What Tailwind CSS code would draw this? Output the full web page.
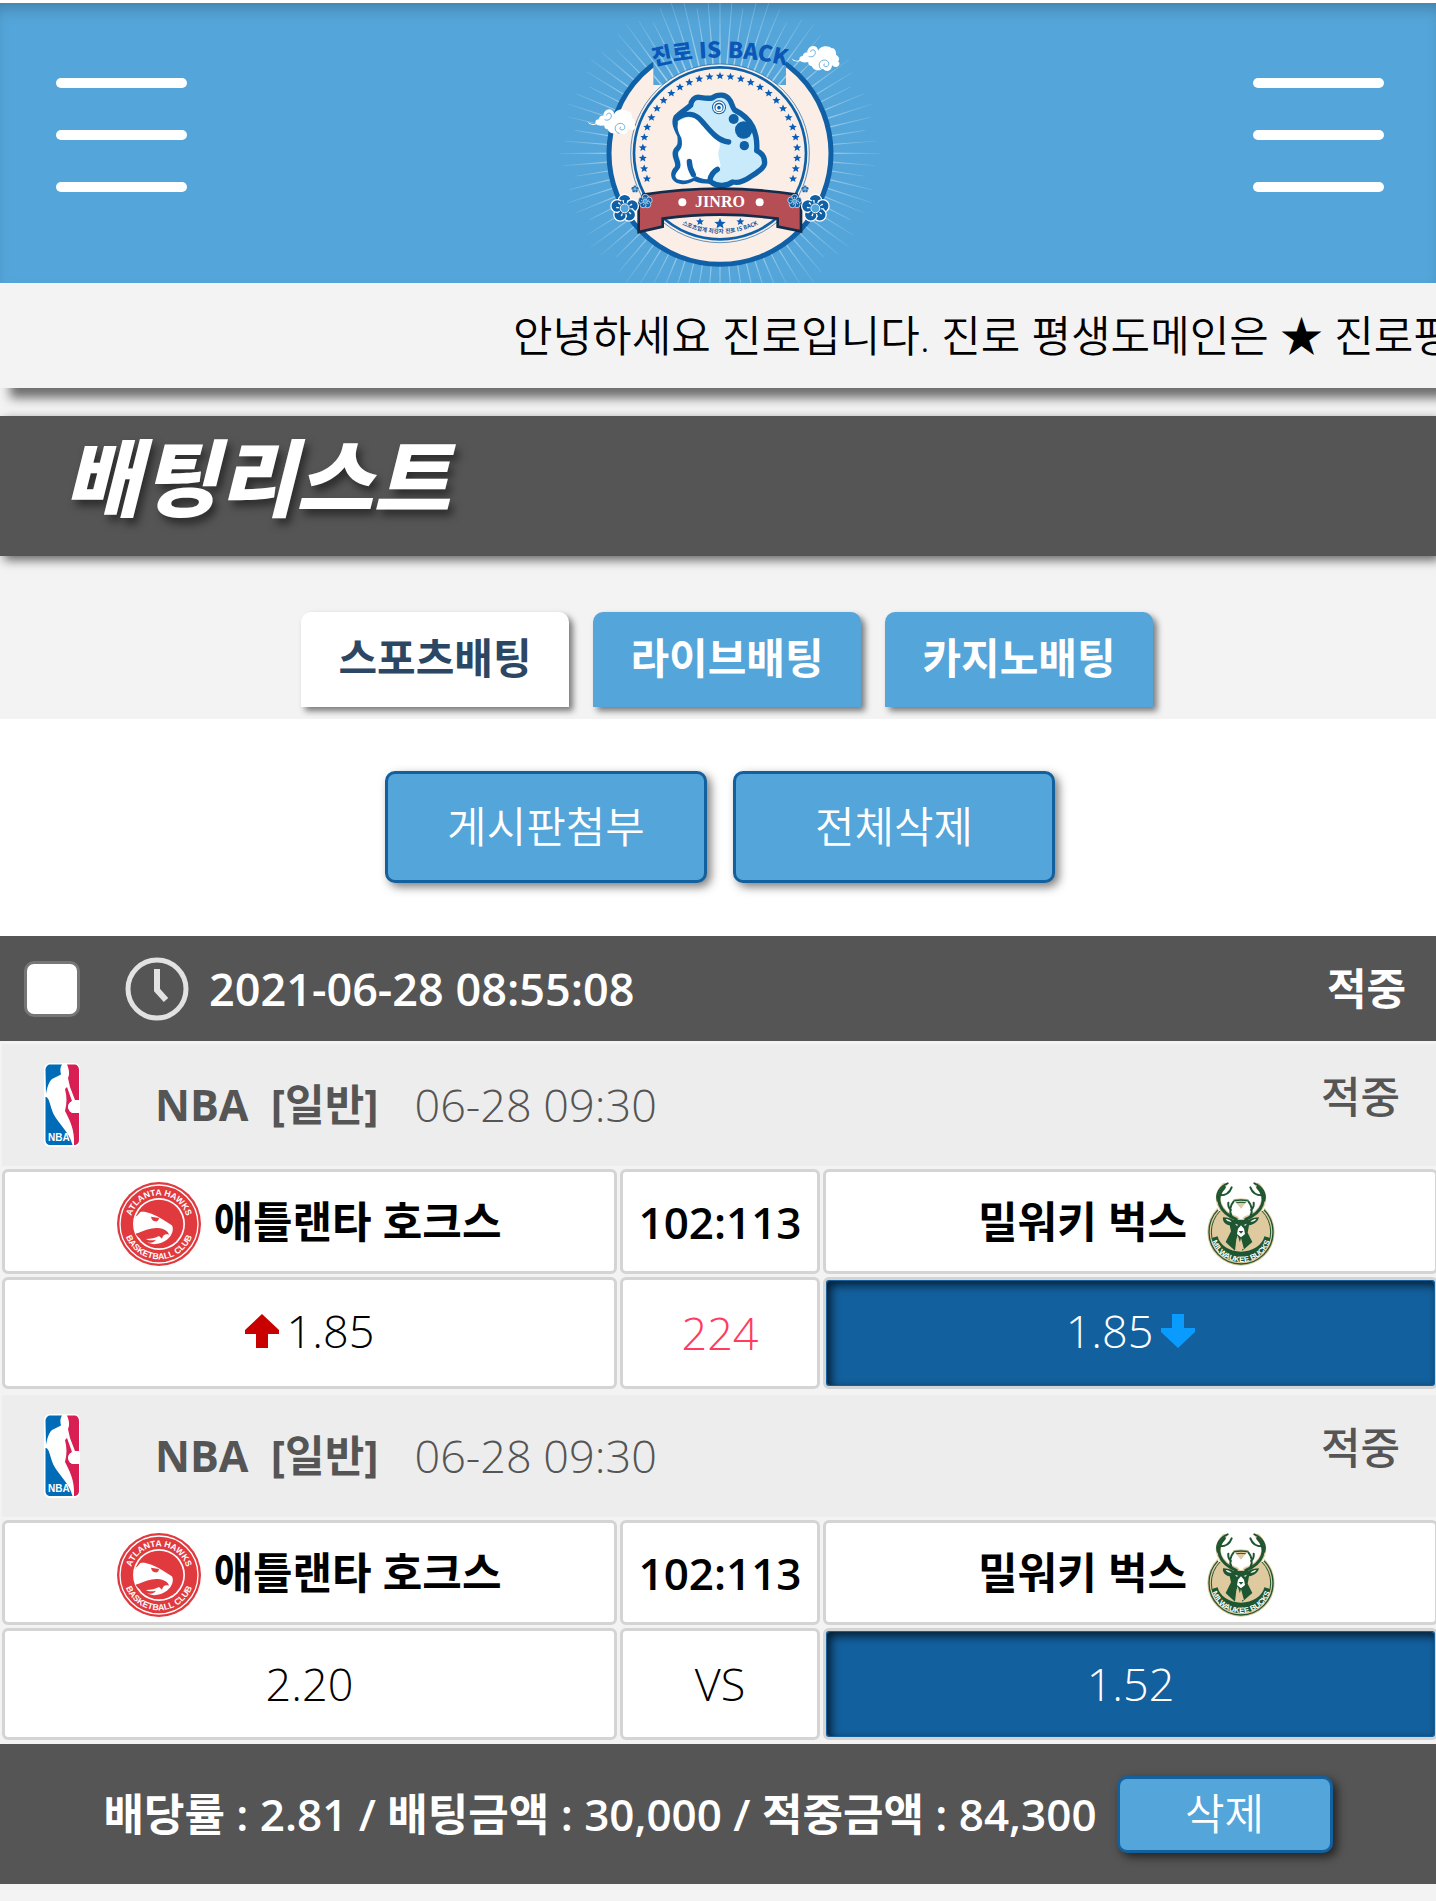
<!DOCTYPE html>
<html lang="ko">
<head>
  <meta charset="UTF-8" />
  <meta name="viewport" content="width=device-width, initial-scale=1.0"/>
  <title>배팅리스트</title>
  <script src="https://cdn.jsdelivr.net/npm/@tailwindcss/browser@4"></script>
</head>
<body class="bg-[#f3f3f3] min-h-screen overflow-x-hidden text-black text-[43px] leading-[60px] font-[350] font-['Open_Sans','Noto_Sans_CJK_KR',sans-serif]">

  <!-- Shared logos -->
  <svg class="absolute w-0 h-0" aria-hidden="true">
    <defs>
      <path id="hawksTop" d="M94 164a86 86 0 0 1 172 0" />
      <path id="hawksBottom" d="M74 164a106 106 0 0 0 212 0" />
      <path id="bucksBottom" d="M62 186a92 92 0 0 0 184 0" />
      <symbol id="hawks" viewBox="54 38 252 252">
        <circle cx="180" cy="164" r="126" fill="#e03a3e" />
        <circle cx="180" cy="164" r="117" fill="none" stroke="#fff" stroke-width="4" />
        <circle cx="180" cy="164" r="78" fill="#fff" />
        <circle cx="180" cy="164" r="73" fill="#e03a3e" />
        <path fill="#fff" d="M124 128c24-6 54-2 74 14 18 14 26 30 23 42-3 16-16 30-38 38-14 4-28 3-38-3 12 3 20 0 26-8-16 4-29 2-38-9 14-9 26-14 40-15l22-1-5-6c-25 3-50 10-72 17-8-14-12-30-12-46 5-8 11-16 18-23z" />
        <path fill="#fff" d="M112 140c26 0 56 8 78 24 14 8 20 14 24 22-14-8-40-10-60-4l-44 10c-6-16-6-34 2-52z" />
        <path fill="#e03a3e" d="M122 124c40-8 88 8 100 46l-32-20c-20-14-44-22-68-26zM156 142l24 4c-1 7-5 11-11 10-7-1-12-6-13-14zM110 194c24-11 46-19 66-18 20 1 32 10 34 20-13-4-19 3-21 12l-9-8c-12 6-26 10-46 9-10 0-18-5-24-15z" />
        <g fill="#fff" font-family="'Liberation Sans'" font-weight="bold" font-size="26" text-anchor="middle">
          <text><textPath href="#hawksTop" startOffset="50%">ATLANTA HAWKS</textPath></text>
          <text><textPath href="#hawksBottom" startOffset="50%">BASKETBALL CLUB</textPath></text>
        </g>
      </symbol>
      <symbol id="bucks" viewBox="28 38 252 252">
        <circle cx="154" cy="188" r="101" fill="#dfc99e" />
        <circle cx="154" cy="188" r="96" fill="none" stroke="#1f5632" stroke-width="4" />
        <circle cx="154" cy="188" r="89" fill="none" stroke="#1f5632" stroke-width="3" />
        <path d="M84 122C82 70 104 50 154 118C204 50 226 70 224 122L154 150z" fill="#fff" />
        <path d="M66 206a90 90 0 0 0 176 0l-18-5c-5 26-36 46-70 46s-65-20-70-46z" fill="#1f5632" />
        <g fill="none" stroke="#dfc99e" stroke-width="15" stroke-linecap="round">
          <path d="M140 148C86 130 70 82 104 48M168 148C222 130 238 82 204 48" />
        </g>
        <g fill="none" stroke="#1f5632" stroke-width="9" stroke-linecap="round" stroke-linejoin="round">
          <path d="M140 150C88 130 72 86 104 54M168 150C220 130 236 86 204 54" />
          <path stroke-width="6" d="M84 94c-6-20 6-42 30-52M92 78c14 0 28-8 34-24M126 142c-8-18-6-32 6-46M124 122c-8-6-9-14-8-22M224 94c6-20-6-42-30-52M216 78c-14 0-28-8-34-24M182 142c8-18 6-32-6-46M184 122c8-6 9-14 8-22" />
        </g>
        <path fill="#1f5632" d="M100 144c12 0 24 3 32 8h44c8-5 20-8 32-8-3 13-14 22-30 24l-4 22 14 28-30 26-10-34-4-12-4 12-4 34-18-16-10-10 16-32-4-18c-14-2-22-12-20-24z" />
        <path fill="#fff" d="M108 149c8 1 14 4 18 8-8 1-14-2-18-8zM200 149c-8 1-14 4-18 8 8 1 14-2 18-8zM145 178l9-10 9 10 3 16-12 10-12-10zM136 163l10 4-5 2zM172 163l-10 4 5 2z" />
        <path fill="#1f5632" d="M147 185h14l-7 8z" />
        <path fill="#dfc99e" d="M154 206l9 34h-18z" />
        <text fill="#fff" font-family="'Liberation Sans'" font-weight="bold" font-size="23" text-anchor="middle"><textPath href="#bucksBottom" startOffset="50%">MILWAUKEE BUCKS</textPath></text>
      </symbol>
      <symbol id="nba" viewBox="0 0 36 84">
        <rect width="36" height="84" rx="6" fill="#fff" />
        <path fill="#006bb6" d="M6 1.500h12c-2 3-2 6-1 10L8 16C4 20 3 26 2 31l-.5-24c0-3 2-5.500 4.500-5.500zM1.500 34c4 0 4 8 8 17 6 11 15 17 19 31h-22c-3 0-5-2-5-5z" />
        <path fill="#d81e53" d="M23 1.500h7c3 0 5 2 5 5.500v30l-4 0-5-13-2-9c2-4 1-9-1-13.500zM21 26l2-2 5 14c-5 3-5 8 0 12l7 0v27c0 3-2 5-5 5h0c1-16-5-26-9-34 2-8 2-14 0-22z" />
        <circle cx="30" cy="44" r="6" fill="#fff" />
        <text x="4" y="78" fill="#fff" font-family="'Liberation Sans'" font-weight="bold" font-size="10">NBA</text>
      </symbol>
      <symbol id="flower" viewBox="-50 -50 100 100">
        <g fill="#0f60a6" stroke="#fff" stroke-width="4">
          <circle cx="0" cy="-24" r="20" /><circle cx="23" cy="-7" r="20" /><circle cx="14" cy="20" r="20" /><circle cx="-14" cy="20" r="20" /><circle cx="-23" cy="-7" r="20" />
        </g>
        <circle r="25" fill="#0f60a6" />
        <circle r="22" fill="none" stroke="#fff" stroke-width="9" stroke-dasharray="4 9.800" />
        <circle r="14" fill="#54a5d9" stroke="#fff" stroke-width="3" />
      </symbol>
      <symbol id="cloud" viewBox="0 0 148 80">
        <path fill="#fff" d="M1 38c6 8 14 10 24 7-3-8 2-13 9-13 2-10 9-12 14-10C48 6 64-4 76 6c4 4 5 9 3 13 6-20 34-20 42-10 9-2 14 8 13 19 10 6 12 15 6 20 6 4 6 12-2 16-8 2-14-1-16-6 0 20-18 24-27 12-10 8-30 6-34-8-9-1-11-8-10-12-10 2-18 2-24-3C15 51 3 48 1 38z" />
        <g fill="none" stroke="#54a5d9" stroke-width="2.500">
          <path d="M58 20c0-9 14-9 14 1 0 12-12 16-20 12M96 74c-16-2-18-28 2-30 18 0 18 20 6 20-8 0-8-8-3-9" />
        </g>
      </symbol>
    </defs>
  </svg>

  <!-- Header -->
  <header class="border-t-3 border-white bg-[#54a5d9]">
    <div class="flex justify-between items-start h-[280px] pl-14 pr-[52px] shadow-[inset_0_12px_16px_-8px_rgba(0,0,0,0.25)]">
      <button type="button" aria-label="메뉴" class="flex flex-col gap-[42px] w-[131px] mt-[75px]">
        <span class="h-[10px] rounded-full bg-white"></span>
        <span class="h-[10px] rounded-full bg-white"></span>
        <span class="h-[10px] rounded-full bg-white"></span>
      </button>

      <a href="#" aria-label="JINRO">
        <svg class="w-[340px] h-[280px]" viewBox="0 9 1020 840">
          <defs>
            <path id="star" d="M0-12L3.500-4 12-3.500 5.500 2 7.500 10 0 5.500-7.500 10-5.500 2-12-3.500-3.500-4z" />
            <path id="sealArc" d="M385 668Q510 732 635 668" />
            <path id="titleArc" d="M316 196Q510 150 704 196" />
            <linearGradient id="rayFade" gradientUnits="userSpaceOnUse" x1="0" y1="-180" x2="0" y2="-480">
              <stop offset="0" stop-color="#b4d9f0" />
              <stop offset="0.600" stop-color="#8fc5e8" />
              <stop offset="1" stop-color="#79b9e3" stop-opacity="0.500" />
            </linearGradient>
          </defs>
          <g id="raysBack" fill="url(#rayFade)" transform="translate(510 460)"></g>
          <circle cx="510" cy="460" r="333" fill="#faeee6" stroke="#0f60a6" stroke-width="15" />
          <path fill="#54a5d9" d="M310 100h398v155h-398z" />
          <svg x="310" y="100" width="398" height="155" viewBox="310 100 398 155"><g id="raysTop" fill="url(#rayFade)" transform="translate(510 460)"></g></svg>
          <circle cx="510" cy="460" r="268" fill="#faeee6" stroke="#0f60a6" stroke-width="2" />
          <circle cx="510" cy="460" r="258" fill="none" stroke="#0f60a6" stroke-width="8" />
          <g id="stars" fill="#0a5cb8" transform="translate(510 460)"></g>

          <text fill="#0a57b8" font-family="'Noto Sans CJK KR'" font-weight="900" font-size="66" text-anchor="middle"><textPath href="#titleArc" startOffset="50%">진로 IS BACK</textPath></text>

          <use href="#cloud" x="724" y="136" width="148" height="80" />
          <use href="#cloud" x="112" y="326" width="148" height="80" />

          <!-- Frog -->
          <g stroke="#0f60a6" stroke-width="16" stroke-linejoin="round" stroke-linecap="round">
            <path fill="#c9eafa" d="M378 352c12-14 30-24 44-36 2-16 12-26 26-24 14 2 24 4 38 2 16-12 40-12 50 2 10 10 10 26 18 34 20 10 42 26 54 50 10 22 14 48 12 72 18 8 24 22 24 36 0 14-14 22-24 30-16 10-26 20-44 26-10 4-18 4-28 2-16 12-46 14-62 2-8-10-30 0-54-14-14 8-34 14-48 8-16-8-16-24-4-36 6-8 4-16 0-26-6-14-8-26 4-36 8-6 8-18 6-36-10-22-20-38-12-56z" />
            <path fill="#fff" stroke="none" d="M386 364c14-10 36-16 60-6l52 58c10 8 16 14 8 36-4 16 4 28 6 46l-30 38c-16 4-30 0-44-8-18 14-38 16-56 10-12-10-4-18 10-36 4-16-6-28-6-46 10-10 12-24 8-42-12-22-14-34-8-50z" />
            <path fill="none" d="M380 356c28-20 56-16 76 8 26 30 46 58 80 62M418 484c0 16 6 30 12 40M502 508c-14 8-20 18-22 32" />
          </g>
          <g fill="#0f60a6">
            <circle cx="551" cy="357" r="15" /><circle cx="581" cy="390" r="26" /><circle cx="583" cy="437" r="14" />
          </g>
          <circle cx="507" cy="322" r="21" fill="#0f60a6" />
          <circle cx="507" cy="322" r="16" fill="none" stroke="#fff" stroke-width="4" />
          <circle cx="507" cy="323" r="8" fill="#0f60a6" stroke="#fff" stroke-width="5" />

          <!-- Ribbon -->
          <path fill="#b64e55" stroke="#122c49" stroke-width="8" d="M280 584Q510 548 740 584L753 612V694L683 680V656Q510 632 338 656V680L266 696V612z" />
          <circle cx="397" cy="607" r="12" fill="#fff" /><circle cx="629" cy="607" r="12" fill="#fff" />
          <text x="510" y="621" fill="#fff" font-family="'Liberation Serif',serif" font-weight="bold" font-size="48" text-anchor="middle">JINRO</text>
          <use href="#flower" x="176" y="576" width="96" height="98" />
          <use href="#flower" x="262" y="580" width="48" height="48" />
          <use href="#flower" x="242" y="554" width="26" height="26" />
          <use href="#flower" x="748" y="576" width="96" height="98" />
          <use href="#flower" x="710" y="580" width="48" height="48" />
          <use href="#flower" x="752" y="554" width="26" height="26" />
          <g fill="#0a5cb8">
            <use href="#star" x="450" y="665" /><use href="#star" x="571" y="665" />
            <use href="#star" transform="translate(510 671) scale(1.400)" />
          </g>
          <text fill="#0f4f9a" font-family="'Noto Sans CJK KR'" font-weight="bold" font-size="17" text-anchor="middle"><textPath href="#sealArc" startOffset="50%">스포츠업계 최강자 진로 IS BACK</textPath></text>
        </svg>
      </a>

      <button type="button" aria-label="내 정보" class="flex flex-col gap-[42px] w-[131px] mt-[75px]">
        <span class="h-[10px] rounded-full bg-white"></span>
        <span class="h-[10px] rounded-full bg-white"></span>
        <span class="h-[10px] rounded-full bg-white"></span>
      </button>
    </div>
  </header>

  <!-- Notice -->
  <div class="h-[105px] bg-[#f3f3f3] shadow-[10px_10px_10px_rgba(0,0,0,0.55)]">
    <div class="flex items-center h-full pl-[513px] overflow-hidden whitespace-nowrap">
      <p>안녕하세요 진로입니다. 진로 평생도메인은 ★ 진로평</p>
    </div>
  </div>

  <!-- Page title -->
  <div class="relative mt-7 h-[140px] px-16 flex items-start bg-[#555] shadow-[4px_4px_10px_rgba(0,0,0,0.6)]">
    <h1 class="pt-1 text-[84px] leading-[116px] font-black italic text-white [text-shadow:4px_6px_8px_rgba(0,0,0,0.5)]">배팅리스트</h1>
  </div>

  <!-- Tabs -->
  <nav class="flex justify-center gap-6 pt-14 pb-3 pl-[18px] text-[42px] font-bold">
    <button type="button" class="w-[268px] h-[95px] pb-1 rounded-t-[10px] bg-white text-[#2c4763] shadow-[4px_4px_6px_rgba(0,0,0,0.5)]">스포츠배팅</button>
    <button type="button" class="w-[268px] h-[95px] pb-1 rounded-t-[10px] bg-[#54a5d9] text-white shadow-[4px_4px_6px_rgba(0,0,0,0.5)]">라이브배팅</button>
    <button type="button" class="w-[268px] h-[95px] pb-1 rounded-t-[10px] bg-[#54a5d9] text-white shadow-[4px_4px_6px_rgba(0,0,0,0.5)]">카지노배팅</button>
  </nav>

  <!-- Actions -->
  <div class="flex justify-center gap-[26px] pt-[52px] pb-[53px] pl-1 bg-white">
    <button type="button" class="w-[322px] h-[112px] rounded-[10px] border-3 border-[#13609e] bg-[#54a5d9] text-white shadow-[4px_4px_10px_rgba(0,0,0,0.5)]">게시판첨부</button>
    <button type="button" class="w-[322px] h-[112px] rounded-[10px] border-3 border-[#13609e] bg-[#54a5d9] text-white shadow-[4px_4px_10px_rgba(0,0,0,0.5)]">전체삭제</button>
  </div>

  <main>
    <!-- Bet header -->
    <div class="flex items-center h-[105px] pl-6 pr-[30px] bg-[#555] text-white font-semibold">
      <input type="checkbox" id="bet1" aria-label="선택" class="appearance-none w-14 h-14 rounded-[10px] border-3 border-[#767676] bg-white" />
      <svg class="w-16 h-16 ml-[45px]" viewBox="0 0 64 64" fill="none" stroke="#e2e2e2" stroke-width="5">
        <circle cx="32" cy="32" r="29" />
        <path stroke-width="6" d="M32 12v21l9 10" />
      </svg>
      <label for="bet1" class="ml-5 text-[45px]">2021-06-28 08:55:08</label>
      <span class="ml-auto">적중</span>
    </div>

    <!-- Bets -->
    <div class="overflow-hidden pb-px">
      <table class="table-fixed border-separate border-spacing-[3px] -ml-px w-[calc(100%+6px)] text-center">
        <colgroup><col class="w-[43%]" /><col class="w-[14%]" /><col class="w-[43%]" /></colgroup>
        <tbody>
          <tr>
            <td colspan="3" class="p-0 bg-[#ededed] text-[#555]">
              <div class="flex items-center h-[122px] pl-[42px] pr-[38px]">
                <svg class="w-9 h-[84px]"><use href="#nba" /></svg>
                <span class="ml-[75px] font-bold">NBA&nbsp; [일반]</span>
                <span class="ml-9 text-[45px]">06-28 09:30</span>
                <span class="ml-auto pb-4 font-medium">적중</span>
              </div>
            </td>
          </tr>
          <tr class="font-semibold">
            <td class="p-0 rounded-[6px] border-3 border-[#d4d4d4] bg-white">
              <div class="flex justify-center items-center gap-3 h-[99px]">
                <svg class="w-[84px] h-[84px] mt-1"><use href="#hawks" /></svg>
                <span>애틀랜타 호크스</span>
              </div>
            </td>
            <td class="p-0 rounded-[6px] border-3 border-[#d4d4d4] bg-white text-[44px]">102:113</td>
            <td class="p-0 rounded-[6px] border-3 border-[#d4d4d4] bg-white">
              <div class="flex justify-center items-center gap-3 h-[99px]">
                <span>밀워키 벅스</span>
                <svg class="w-[84px] h-[84px] mt-1"><use href="#bucks" /></svg>
              </div>
            </td>
          </tr>
          <tr class="text-[45px]">
            <td class="p-0 rounded-[6px] border-3 border-[#d4d4d4] bg-white">
              <div class="flex justify-center items-center gap-2 h-[106px] pb-1">
                <svg class="w-[34px] h-[34px]" viewBox="0 0 34 34" fill="#c80000"><path d="M17 0L34 16v4H23v14H11V20H0v-4z" /></svg>
                <span>1.85</span>
              </div>
            </td>
            <td class="p-0 rounded-[6px] border-3 border-[#d4d4d4] bg-white text-[#ff3b5f]">224</td>
            <td class="p-0 rounded-[6px] border-3 border-[#d4d4d4] bg-[#13609e] text-white">
              <div class="flex justify-center items-center gap-2 h-[106px] pb-1 rounded-[4px] border border-[#13609e] shadow-[inset_4px_4px_10px_rgba(0,0,0,0.7)]">
                <span>1.85</span>
                <svg class="w-[34px] h-[34px]" viewBox="0 0 34 34" fill="#0a9bff"><path d="M17 34L34 18v-4H23V0H11v14H0v4z" /></svg>
              </div>
            </td>
          </tr>
        </tbody>
      </table>

      <table class="table-fixed border-separate border-spacing-[3px] -ml-px w-[calc(100%+6px)] text-center">
        <colgroup><col class="w-[43%]" /><col class="w-[14%]" /><col class="w-[43%]" /></colgroup>
        <tbody>
          <tr>
            <td colspan="3" class="p-0 bg-[#ededed] text-[#555]">
              <div class="flex items-center h-[122px] pl-[42px] pr-[38px]">
                <svg class="w-9 h-[84px]"><use href="#nba" /></svg>
                <span class="ml-[75px] font-bold">NBA&nbsp; [일반]</span>
                <span class="ml-9 text-[45px]">06-28 09:30</span>
                <span class="ml-auto pb-4 font-medium">적중</span>
              </div>
            </td>
          </tr>
          <tr class="font-semibold">
            <td class="p-0 rounded-[6px] border-3 border-[#d4d4d4] bg-white">
              <div class="flex justify-center items-center gap-3 h-[99px]">
                <svg class="w-[84px] h-[84px] mt-1"><use href="#hawks" /></svg>
                <span>애틀랜타 호크스</span>
              </div>
            </td>
            <td class="p-0 rounded-[6px] border-3 border-[#d4d4d4] bg-white text-[44px]">102:113</td>
            <td class="p-0 rounded-[6px] border-3 border-[#d4d4d4] bg-white">
              <div class="flex justify-center items-center gap-3 h-[99px]">
                <span>밀워키 벅스</span>
                <svg class="w-[84px] h-[84px] mt-1"><use href="#bucks" /></svg>
              </div>
            </td>
          </tr>
          <tr class="text-[45px]">
            <td class="p-0 rounded-[6px] border-3 border-[#d4d4d4] bg-white">2.20</td>
            <td class="p-0 rounded-[6px] border-3 border-[#d4d4d4] bg-white">VS</td>
            <td class="p-0 rounded-[6px] border-3 border-[#d4d4d4] bg-[#13609e] text-white">
              <div class="flex justify-center items-center h-[106px] rounded-[4px] border border-[#13609e] shadow-[inset_4px_4px_10px_rgba(0,0,0,0.7)]">1.52</div>
            </td>
          </tr>
        </tbody>
      </table>
    </div>

    <!-- Totals -->
    <div class="flex justify-center items-center gap-5 h-[140px] bg-[#555] text-white whitespace-nowrap">
      <p class="text-[44px] font-semibold">배당률 : 2.81 / 배팅금액 : 30,000 / 적중금액 : 84,300</p>
      <button type="button" class="w-[216px] h-[77px] rounded-[10px] border-3 border-[#13609e] bg-[#54a5d9] shadow-[4px_4px_10px_rgba(0,0,0,0.6)]">삭제</button>
    </div>
  </main>

  <script>
    const NS = 'http://www.w3.org/2000/svg';

    // 80 rays round the seal
    ['raysBack', 'raysTop'].forEach(id => {
      const group = document.getElementById(id);
      for (let i = 0; i < 80; i++) {
        const ray = document.createElementNS(NS, 'path');
        const len = [478, 466, 440, 470][i % 4];
        ray.setAttribute('d', `M-3-180L-1-${len}H1L3-180z`);
        ray.setAttribute('transform', `rotate(${i * 4.5})`);
        group.appendChild(ray);
      }
    });

    const stars = document.getElementById('stars');
    for (let i = -14; i <= 14; i++) {
      const star = document.createElementNS(NS, 'use');
      const a = i * 7.8 * Math.PI / 180;
      star.setAttribute('href', '#star');
      star.setAttribute('x', 232 * Math.sin(a));
      star.setAttribute('y', -232 * Math.cos(a));
      stars.appendChild(star);
    }
  </script>

</body>
</html>
